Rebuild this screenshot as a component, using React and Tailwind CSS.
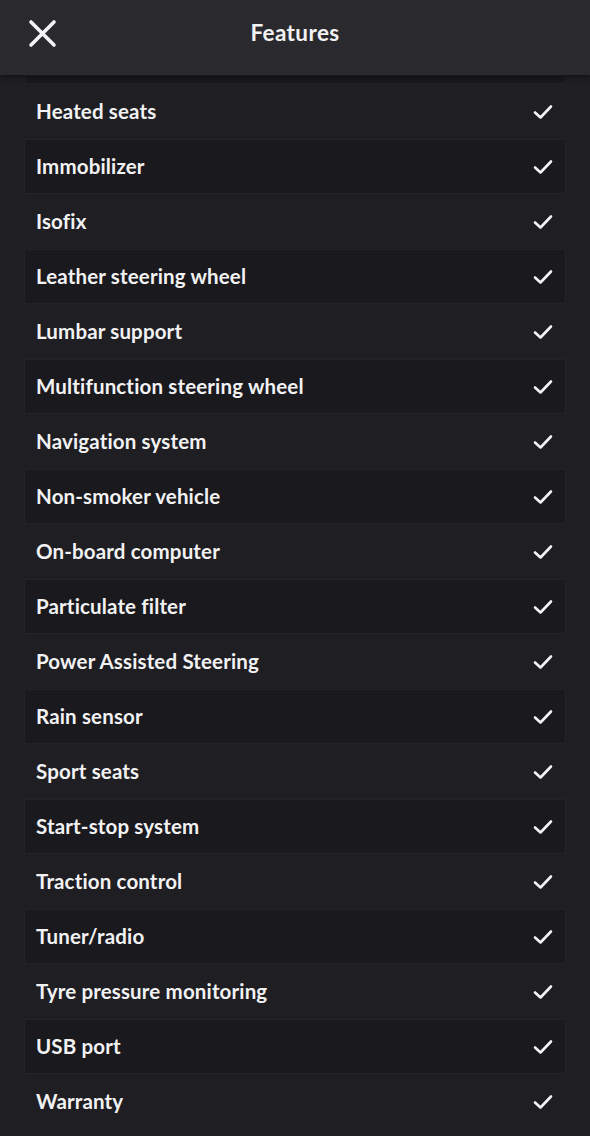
import React from 'react';

const features = [
  'Heated seats',
  'Immobilizer',
  'Isofix',
  'Leather steering wheel',
  'Lumbar support',
  'Multifunction steering wheel',
  'Navigation system',
  'Non-smoker vehicle',
  'On-board computer',
  'Particulate filter',
  'Power Assisted Steering',
  'Rain sensor',
  'Sport seats',
  'Start-stop system',
  'Traction control',
  'Tuner/radio',
  'Tyre pressure monitoring',
  'USB port',
  'Warranty',
];

const Check = () => (
  <svg width="20" height="16" viewBox="0 0 20 16" fill="none">
    <path d="M2 8.5 L7.5 13.5 L18 2.5" stroke="#f4f4f5" strokeWidth="2.6" strokeLinecap="round" strokeLinejoin="round" />
  </svg>
);

export default function App() {
  return (
    <div className="w-[590px] h-[1136px] overflow-hidden bg-[#1f1e23] text-[#f2f2f3]" style={{ fontFamily: 'Lato, "Open Sans", sans-serif' }}>
      {/* header */}
      <div className="relative z-10 h-[75px] flex items-start pt-[18px] bg-[#2a292e] shadow-[0_2px_6px_rgba(0,0,0,0.45)]">
        <button className="ml-[27px] w-[30px] h-[30px] flex items-center justify-center">
          <svg width="29" height="29" viewBox="0 0 29 29" fill="none">
            <path d="M3 3 L26 26 M26 3 L3 26" stroke="#f4f4f5" strokeWidth="3.6" strokeLinecap="round" />
          </svg>
        </button>
        <h1 className="flex-1 text-center text-[22.5px] leading-[30px] font-bold pr-[57px] tracking-[0.4px]">Features</h1>
      </div>

      {/* list */}
      <div className="px-[24px]">
        <div className="h-[9px] bg-[#1a191e] shadow-[inset_0_0_0_1px_#232227]" />
        {features.map((f, i) => (
          <div
            key={f}
            className={`h-[55px] flex items-center justify-between pl-[12px] pr-[13px] ${
              i % 2 === 1 ? 'bg-[#1a191e] shadow-[inset_0_0_0_1px_#232227]' : ''
            }`}
          >
            <span className="text-[20.5px] font-bold tracking-[0.15px]">{f}</span>
            <Check />
          </div>
        ))}
      </div>
    </div>
  );
}
